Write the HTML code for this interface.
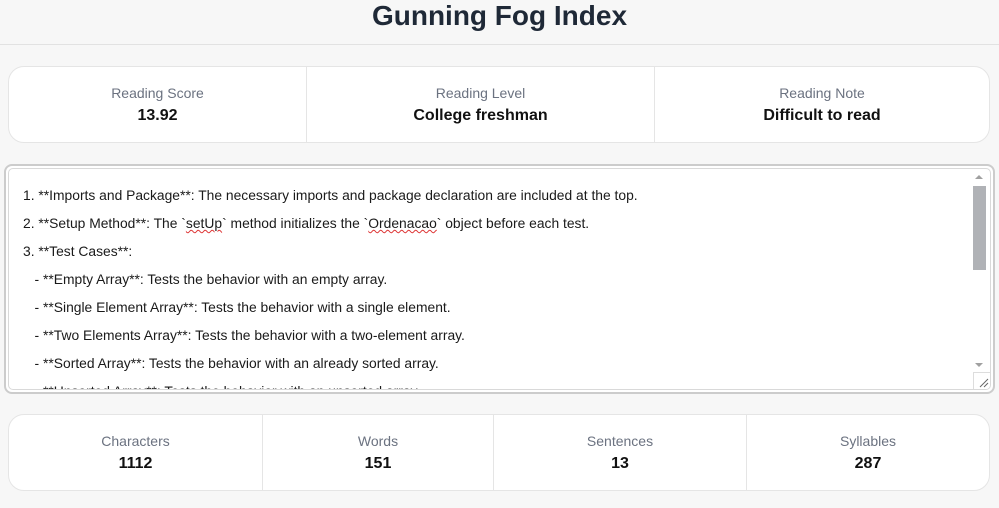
<!DOCTYPE html>
<html><head><meta charset="utf-8"><style>
*{box-sizing:border-box;margin:0;padding:0}
body{width:999px;height:508px;overflow:hidden;background:#f7f7f7;font-family:"Liberation Sans",sans-serif;position:relative}
.hdr{position:absolute;left:0;top:0;width:999px;height:45px;border-bottom:1px solid #e2e2e2;text-align:center}
.hdr h1{font-size:28px;font-weight:bold;color:#1f2937;line-height:32px;padding-top:0}
.card{position:absolute;left:8px;width:982px;height:77px;background:#fff;border:1px solid #e5e5e5;border-radius:16px;display:flex;overflow:hidden}
.card div{border-right:1px solid #e5e5e5;text-align:center;padding-top:17px}
.card div:last-child{border-right:none}
.l{font-size:14px;color:#6b7280;line-height:18px}
.v{font-size:16px;font-weight:bold;color:#111;line-height:22px;margin-top:3px}
.ta{position:absolute;left:4px;top:164px;width:991px;height:230px;border:2px solid #ccc;border-radius:8px;background:#fff;padding:2px}
.in{position:absolute;left:2px;top:2px;right:2px;bottom:2px;border:1px solid #d9d9d9;border-radius:5px;overflow:hidden}
.txt{position:absolute;left:14px;top:12px;font-size:13.85px;line-height:28px;color:#1a1a1a;white-space:pre}
.sb{position:absolute;right:4px;top:5px;width:14px;height:208px}
.thumb{position:absolute;left:1px;top:12px;width:13px;height:84px;background:#b0b2b6}
.u{text-decoration:underline wavy #d33;text-decoration-thickness:1px}
</style></head><body>
<div class="hdr"><h1>Gunning Fog Index</h1></div>
<div class="card" style="top:66px">
<div style="width:298px"><p class="l">Reading Score</p><p class="v">13.92</p></div>
<div style="width:348px"><p class="l">Reading Level</p><p class="v">College freshman</p></div>
<div style="flex:1"><p class="l">Reading Note</p><p class="v">Difficult to read</p></div>
</div>
<div class="ta"><div class="in">
<div class="txt">1. **Imports and Package**: The necessary imports and package declaration are included at the top.
2. **Setup Method**: The `<span class="u">setUp</span>` method initializes the `<span class="u">Ordenacao</span>` object before each test.
3. **Test Cases**:
   - **Empty Array**: Tests the behavior with an empty array.
   - **Single Element Array**: Tests the behavior with a single element.
   - **Two Elements Array**: Tests the behavior with a two-element array.
   - **Sorted Array**: Tests the behavior with an already sorted array.
   - **Unsorted Array**: Tests the behavior with an unsorted array.</div>
<div class="sb"><div style="position:absolute;left:3px;top:1px;border:4px solid transparent;border-bottom:4px solid #a0a0a0;border-top:0"></div><div class="thumb"></div><div style="position:absolute;left:3px;top:189px;border:4px solid transparent;border-top:4px solid #a0a0a0;border-bottom:0"></div></div>
<div style="position:absolute;right:0;bottom:0;width:17px;height:17px;border-left:1px solid #ddd;border-top:1px solid #ddd;background:#fff"><svg width="16" height="16"><path d="M14 6L6 14M14 10L10 14" stroke="#666" stroke-width="1"/></svg></div>
</div></div>
<div class="card" style="top:414px">
<div style="width:254px"><p class="l">Characters</p><p class="v">1112</p></div>
<div style="width:231px"><p class="l">Words</p><p class="v">151</p></div>
<div style="width:253px"><p class="l">Sentences</p><p class="v">13</p></div>
<div style="flex:1"><p class="l">Syllables</p><p class="v">287</p></div>
</div>
</body></html>
